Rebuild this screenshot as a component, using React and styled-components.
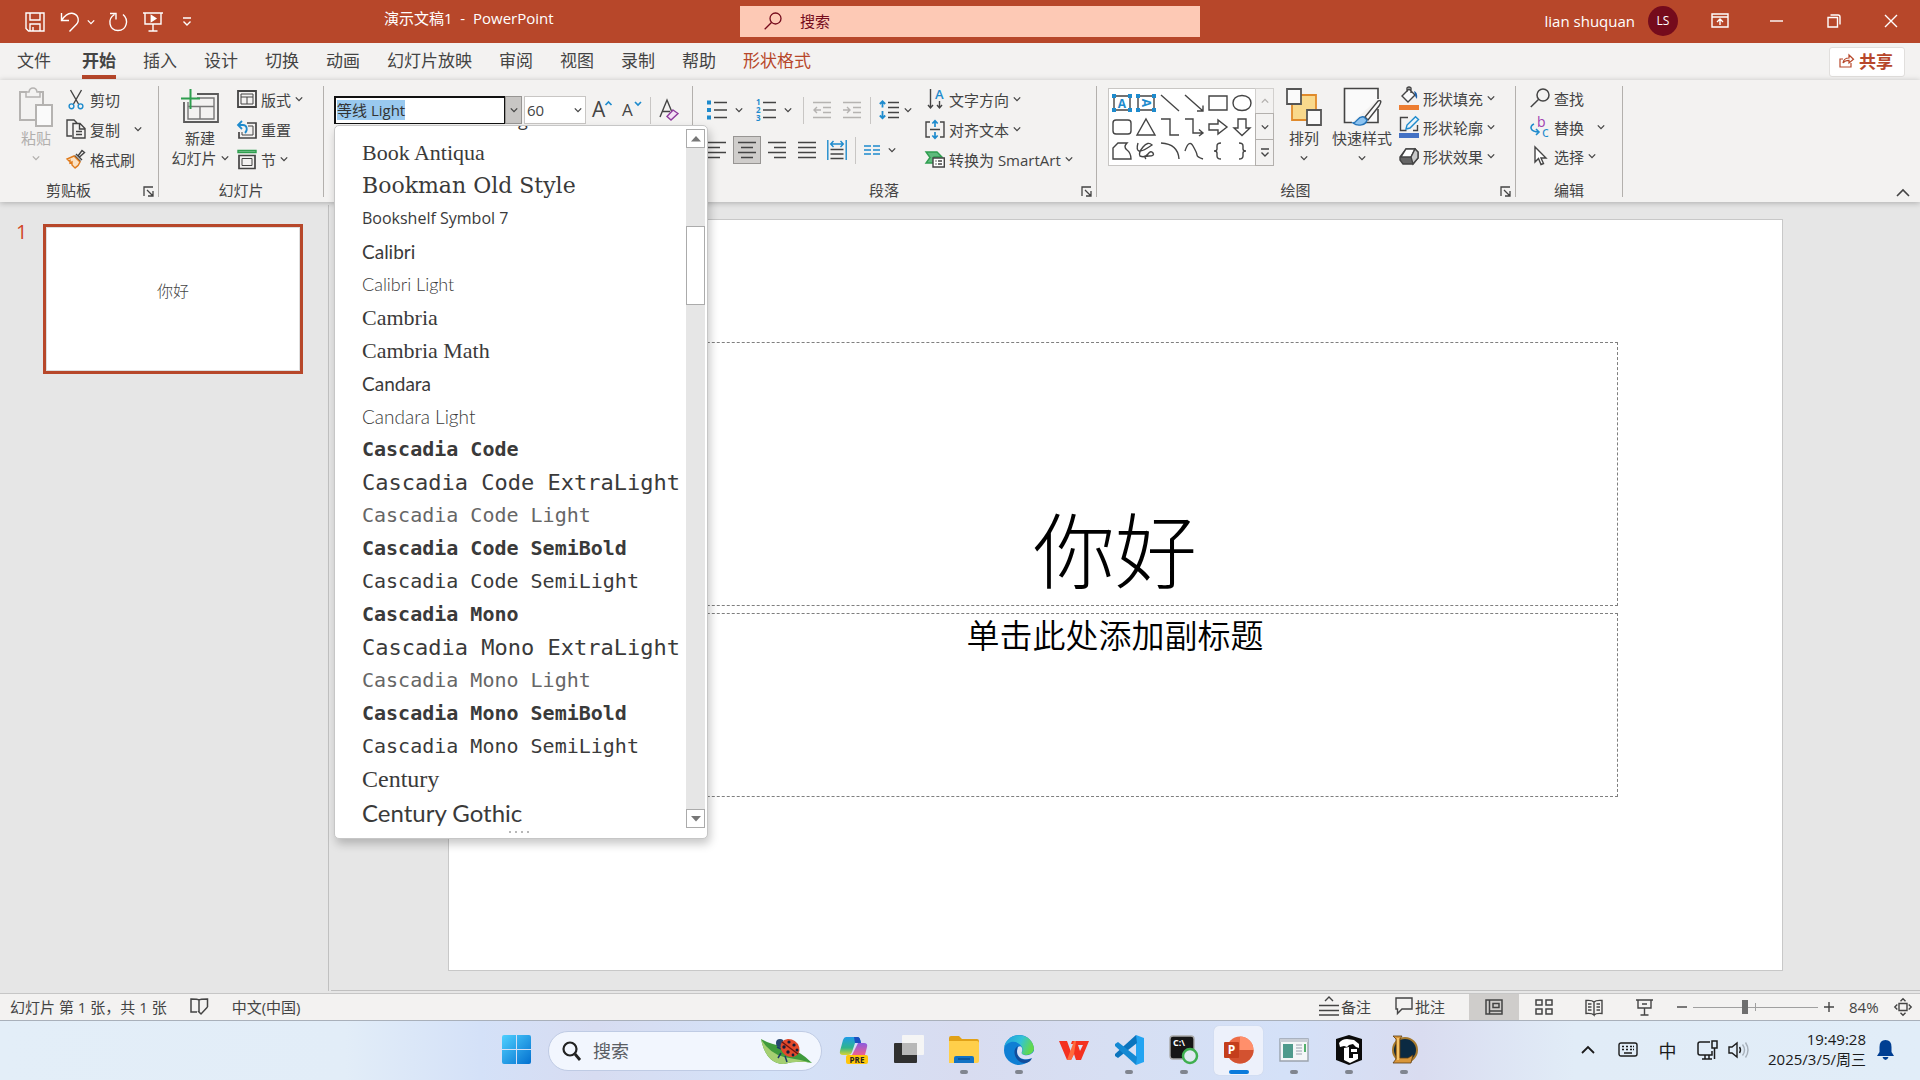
import React, { useEffect, useRef } from 'react';
import styled, { createGlobalStyle, css } from 'styled-components';

const ui = '"Open Sans", "Noto Sans CJK SC", sans-serif';

const GlobalStyle = createGlobalStyle`
  *, *::before, *::after { box-sizing: border-box; }
  html, body { margin: 0; height: 100%; overflow: hidden; }
  body { font-family: ${ui}; font-size: 15px; color: #444; background: #e6e6e6; }
  button, input, select { font: inherit; color: inherit; margin: 0; padding: 0; border: 0; background: none; border-radius: 0; outline: none; }
  button { white-space: nowrap; cursor: default; }
  svg { display: block; flex: none; }
  h1, p, ul { margin: 0; padding: 0; }
`;

const App = styled.div`
  display: flex;
  flex-direction: column;
  height: 100vh;
`;

/* ---------- title bar ---------- */

const TitleBar = styled.header`
  display: grid;
  grid-template-columns: 740fr 460fr 720fr;
  height: 43px;
  flex: none;
  background: #b7472a;
  color: #fff;
`;

const TitleLeft = styled.div`
  display: flex;
  align-items: center;
`;

const QuickAccess = styled.div`
  display: flex;
  align-items: center;
  padding: 1px 0 0 19px;
  width: 384px;
`;

const QuickButton = styled.button`
  display: grid;
  place-items: center;
  width: ${(p) => p.$w || 32}px;
  height: 32px;
  margin-left: ${(p) => p.$ml || 0}px;
`;

const DocTitle = styled.div`
  font-size: 15px;
  line-height: 36px;
  height: 43px;
  white-space: pre;
`;

const TitleSearch = styled.label`
  display: flex;
  align-items: center;
  gap: 18px;
  height: 31px;
  margin-top: 6px;
  padding: 0 24px 2px;
  background: #fdc9b5;
  color: #750b1c;
  input { flex: 1; min-width: 0; }
  input::placeholder { color: #750b1c; opacity: 1; }
`;

const TitleRight = styled.div`
  display: flex;
  align-items: center;
  justify-content: flex-end;
  padding: 0 1px 2px 0;
`;

const Avatar = styled.div`
  width: 30px;
  height: 30px;
  margin: 0 13px 0 13px;
  border-radius: 50%;
  background: #750b1c;
  font-size: 12px;
  line-height: 30px;
  text-align: center;
`;

const WindowButton = styled.button`
  display: grid;
  place-items: center;
  width: 57px;
  height: 40px;
`;

/* ---------- ribbon ---------- */

const TabBar = styled.nav`
  display: flex;
  align-items: flex-start;
  gap: 27px;
  height: 37px;
  flex: none;
  padding: 0 15px 0 17px;
  background: #f3f2f1;
`;

const Tab = styled.button`
  height: 36px;
  padding-top: 4px;
  margin-right: ${(p) => (p.$file ? 4 : 0)}px;
  font-size: 17px;
  line-height: 28px;
  border-bottom: 4px solid transparent;
  ${(p) => p.$active && css`font-weight: 700; border-color: #b7472a;`}
  ${(p) => p.$context && css`color: #b7472a;`}
`;

const ShareButton = styled.button`
  display: flex;
  align-items: center;
  justify-content: center;
  gap: 5px;
  width: 76px;
  height: 30px;
  margin: 4px 0 0 auto;
  padding: 0 2px 3px 0;
  border: 1px solid #e1dfdd;
  border-radius: 3px;
  background: #fff;
  color: #b7472a;
  font-size: 17px;
  font-weight: 700;
`;

const RibbonBar = styled.section`
  position: relative;
  z-index: 2;
  display: flex;
  height: 122px;
  flex: none;
  padding: 6px 0 5px;
  background: #f3f2f1;
  box-shadow: 0 1px 6px rgba(0, 0, 0, 0.25);
`;

const GroupBox = styled.div`
  display: flex;
  flex-direction: column;
  flex: none;
  width: ${(p) => p.$w}px;
  border-right: 1px solid #b3b0ad;
`;

const GroupBody = styled.div`
  display: flex;
  align-items: flex-start;
  flex: 1;
  padding-left: ${(p) => p.$pl}px;
`;

const GroupFoot = styled.div`
  display: flex;
  align-items: center;
  height: 12px;
  span { flex: 1; text-align: center; line-height: 12px; padding-bottom: 2px; }
`;

const Launcher = styled.button`
  width: 21px;
  height: 12px;
  padding-left: 6px;
`;

const Collapse = styled.button`
  align-self: flex-end;
  margin: 0 10px 0 auto;
`;

const BigButton = styled.button`
  display: flex;
  flex-direction: column;
  align-items: center;
  width: ${(p) => p.$w}px;
  margin-right: ${(p) => p.$mr}px;
  color: ${(p) => (p.$off ? '#b1afad' : '#444')};
  line-height: 20px;
`;

const BigIcon = styled.span`
  display: grid;
  place-items: center;
  height: 42px;
`;

const BigLine = styled.span`
  display: flex;
  align-items: center;
  justify-content: center;
  gap: 4px;
  height: 20px;
`;

const Column = styled.div`
  display: flex;
  flex-direction: column;
  align-items: flex-start;
  gap: ${(p) => p.$gap || 0}px;
`;

const SmallBtn = styled.button`
  display: flex;
  align-items: center;
  height: ${(p) => p.$h || 30}px;
  padding-bottom: 4px;
`;

const IconSlot = styled.span`
  display: grid;
  place-items: center;
  width: 24px;
  margin-right: 2px;
`;

const ChevronSlot = styled.span`
  margin-left: ${(p) => p.$gap}px;
`;

const ToolRow = styled.div`
  display: flex;
  align-items: center;
  gap: 2px;
  height: 28px;
  margin-top: ${(p) => p.$mt}px;
`;

const ParagraphTools = styled.div`
  width: 220px;
`;

const ToolButton = styled.button`
  display: grid;
  place-items: center;
  width: 28px;
  height: 28px;
  ${(p) => p.$on && css`background: #cfcdcb; border: 1px solid #979593;`}
`;

const SplitButton = styled.button`
  display: flex;
  align-items: center;
  gap: ${(p) => p.$gap}px;
  width: 47px;
  height: 28px;
  padding-left: 4px;
`;

const Separator = styled.i`
  width: 1px;
  height: 27px;
  margin: 0 2px;
  background: #c8c6c4;
`;

/* ---------- font picker ---------- */

const FontCombo = styled.div`
  position: relative;
  display: flex;
  width: 188px;
  height: 28px;
  background: #fff;
`;

const FontInput = styled.input`
  flex: 1;
  min-width: 0;
  padding: 0 0 1px 1px;
  border: 2px solid #111;
  border-right-width: 1px;
  border-bottom-width: 1px;
  font-size: 15px;
  line-height: 20px;
  &::selection { background: #99c9ef; color: #333; }
`;

const FontArrow = styled.button`
  display: grid;
  place-items: center;
  width: 17px;
  border: 1px solid #979593;
  background: #c8c6c4;
`;

const SizeCombo = styled.label`
  display: flex;
  align-items: center;
  width: 62px;
  height: 28px;
  padding: 0 3px 0 2px;
  border: 1px solid #c8c6c4;
  background: #fff;
  select { flex: 1; appearance: none; }
`;

const FontMenu = styled.div`
  position: absolute;
  top: 29px;
  left: 0;
  display: flex;
  width: 374px;
  height: 714px;
  padding: 3px 2px 11px 0;
  border: 1px solid #c6c6c6;
  border-radius: 5px;
  background: #fff;
  box-shadow: 2px 5px 10px rgba(0, 0, 0, 0.22);
`;

const FontList = styled.ul`
  display: flex;
  flex-direction: column;
  justify-content: flex-end;
  flex: 1;
  height: 703px;
  margin-top: -3px;
  overflow: hidden;
  list-style: none;
`;

const FontItem = styled.li`
  flex: none;
  height: 33px;
  padding-left: 27px;
  line-height: 33px;
  white-space: nowrap;
  font-family: ${(p) => p.$family};
  font-size: ${(p) => p.$size}px;
  font-weight: ${(p) => p.$weight || 400};
  color: ${(p) => (p.$light ? '#666' : '#3a3a3a')};
`;

const ScrollTrack = styled.div`
  display: flex;
  flex-direction: column;
  width: 19px;
  height: 699px;
  background: #e6e6e6;
`;

const ScrollArrow = styled.button`
  display: grid;
  place-items: center;
  height: 19px;
  border: 1px solid #ababab;
  background: #fff;
`;

const ScrollThumb = styled.div`
  height: 79px;
  margin: 78px 0 auto;
  border: 1px solid #ababab;
  background: #fff;
`;

const Grip = styled.div`
  position: absolute;
  left: 0;
  right: 0;
  bottom: 5px;
  display: flex;
  justify-content: center;
  gap: 4px;
  padding-right: 4px;
  i { width: 2px; height: 2px; background: #b8b8b8; }
`;

/* ---------- shape gallery ---------- */

const Gallery = styled.div`
  display: flex;
  width: 166px;
  height: 78px;
  margin: 2px 8px 0 0;
  border: 1px solid #c8c6c4;
  background: #fff;
`;

const ShapeGrid = styled.div`
  display: grid;
  grid-template-columns: repeat(6, 24px);
  grid-template-rows: repeat(3, 24px);
  padding: 2px 1px;
  button { display: grid; place-items: center; }
`;

const GalleryScroll = styled.div`
  display: grid;
  grid-template-rows: repeat(3, 1fr);
  width: 19px;
  margin: -1px -1px -1px auto;
  button {
    display: grid;
    place-items: center;
    border: 1px solid #b3b0ad;
    margin-top: -1px;
    background: #f3f2f1;
  }
  button:first-child { margin: 0; border-color: #d2d0ce; }
`;

/* ---------- workspace ---------- */

const Workspace = styled.main`
  display: flex;
  flex: 1;
  min-height: 0;
  padding: 3px 0 2px;
`;

const Thumbnails = styled.aside`
  display: flex;
  align-items: flex-start;
  gap: 18px;
  width: 329px;
  flex: none;
  padding: 19px 0 0 16px;
  border-right: 1px solid #c0c0c0;
`;

const ThumbNumber = styled.span`
  width: 9px;
  font-size: 20px;
  line-height: 16px;
  color: #d24726;
`;

const Thumb = styled.button`
  width: 260px;
  height: 150px;
  padding: 0 0 19px;
  border: 3px solid #b7472a;
  background: #fff;
  box-shadow: inset 0 0 0 1px #dedede;
  font-size: 16px;
  font-weight: 300;
`;

const Editor = styled.section`
  flex: 1;
  min-width: 0;
  margin-left: 2px;
  padding: 14px 137px 0 117px;
  border-bottom: 1px solid #c0c0c0;
`;

const Slide = styled.article`
  display: grid;
  grid-template-columns: 163fr 1006fr 164fr;
  grid-template-rows: 122fr 264fr 7fr 184fr 172fr;
  width: 100%;
  aspect-ratio: 1334 / 751;
  border: 1px solid #c8c8c8;
  background: #fff;
  color: #000;
`;

const Placeholder = styled.div`
  display: flex;
  justify-content: center;
  grid-column: 2;
  grid-row: ${(p) => p.$row};
  align-items: ${(p) => p.$align};
  border: 1px dashed #7f7f7f;
  font-family: "Noto Sans CJK SC", sans-serif;
  h1 { font-size: 82px; line-height: 116px; font-weight: 300; }
  p { font-size: 33px; line-height: 40px; font-weight: 350; }
`;

/* ---------- status bar ---------- */

const StatusBar = styled.footer`
  display: flex;
  align-items: center;
  height: 28px;
  flex: none;
  padding: 0 8px 0 10px;
  border-top: 1px solid #c6c6c6;
  border-bottom: 1px solid #a9b0ba;
  background: #f3f2f1;
`;

const StatusLeft = styled.div`
  display: flex;
  align-items: center;
  gap: 23px;
  padding-bottom: 2px;
  white-space: pre;
`;

const StatusRight = styled.div`
  display: flex;
  align-items: center;
  height: 100%;
  margin-left: auto;
`;

const StatusButton = styled.button`
  display: flex;
  align-items: center;
  gap: 2px;
  margin-right: 24px;
  padding-bottom: 2px;
`;

const ViewButton = styled.button`
  display: grid;
  place-items: center;
  width: 50px;
  height: 26px;
  background: ${(p) => (p.$on ? '#cfcdcb' : 'transparent')};
`;

const ZoomSlider = styled.input`
  appearance: none;
  width: 125px;
  height: 20px;
  margin: 0 5px;
  background:
    linear-gradient(#a0a0a0, #a0a0a0) 62px 6px / 1px 8px no-repeat,
    linear-gradient(#a0a0a0, #a0a0a0) 0 10px / 100% 1px no-repeat;
  &::-webkit-slider-thumb {
    appearance: none;
    width: 6px;
    height: 14px;
    background: #6e6e6e;
  }
`;

const ZoomValue = styled.span`
  width: 31px;
  margin: 0 14px;
`;

/* ---------- taskbar ---------- */

const Taskbar = styled.nav`
  display: flex;
  align-items: center;
  justify-content: space-between;
  height: 59px;
  flex: none;
  background: linear-gradient(90deg, #e3eef8 0%, #e2edf8 18%, #d4e1f8 25%, #d7dcf1 31%, #d4e2f8 40%, #d8dcf0 50%, #d7dff3 58%, #d4e1f8 67%, #d9dcf0 74%, #e1ecf7 82%, #e1edf8 100%);
`;

const TaskEdge = styled.div`
  display: flex;
  flex: 1;
  align-items: center;
  justify-content: flex-end;
`;

const TaskCenter = styled.div`
  display: flex;
  align-items: center;
`;

const TaskSearch = styled.label`
  display: flex;
  align-items: center;
  gap: 12px;
  width: 274px;
  height: 40px;
  margin: 0 4px;
  padding: 0 8px 0 13px;
  border: 1px solid #bfcbe4;
  border-radius: 20px;
  background: #f2f6fe;
  font-size: 18px;
  input { flex: 1; min-width: 0; }
  input::placeholder { color: #5a5d63; opacity: 1; }
`;

const TaskButton = styled.button`
  display: flex;
  flex-direction: column;
  align-items: center;
  width: 49px;
  height: 49px;
  margin: 0 3px;
  padding-top: 9px;
  border-radius: 5px;
  ${(p) => p.$on && css`background: #edf1fb; box-shadow: 0 0 1px #b9c2d6;`}
  &::after {
    content: '';
    width: ${(p) => (p.$on ? 20 : 8)}px;
    height: 4px;
    margin-top: 5px;
    border-radius: 2px;
    background: ${(p) => (p.$on ? '#0a7bdc' : p.$running ? '#80858f' : 'transparent')};
  }
`;

const Tray = styled.div`
  display: flex;
  align-items: center;
  margin-right: 25px;
  padding-bottom: 2px;
  color: #1b1b1b;
`;

const TrayButton = styled.button`
  display: grid;
  place-items: center;
  width: ${(p) => p.$w}px;
  height: 40px;
  font-size: 18px;
`;

const Clock = styled.time`
  width: 107px;
  margin: 0 9px 0 10px;
  padding-bottom: 2px;
  line-height: 20px;
  text-align: right;
  white-space: nowrap;
`;

/* ---------- drawings ---------- */

function Ico({ w = 20, h = 20, vb, s = 'currentColor', sw = 1.4, f = 'none', children }) {
  return (
    <svg width={w} height={h} viewBox={vb || `0 0 ${w} ${h}`} fill={f} stroke={s} strokeWidth={sw} overflow="visible" aria-hidden="true">
      {children}
    </svg>
  );
}

const BLUE = '#1e8bcd';

const Chevron = ({ up, color }) => (
  <Ico w={8} h={6} s={color || 'currentColor'} sw={1.3}><path d={up ? 'M.8 4.6 4 1.4l3.2 3.2' : 'M.8 1.4 4 4.6l3.2-3.2'} /></Ico>
);

const icons = {
  save: <Ico><path d="M1 1h18v18H3.500L1 16.500zM5 1v7h10V1M5 19v-7h10v7M8 19v-4" /></Ico>,
  undo: <Ico><path d="M1.500 1v7.500H9M1.500 8.500C5 3 8.500 1 12 1.300c6 .6 8 7 4.500 11L9.500 19.500" /></Ico>,
  redo: <Ico><path d="M15 2.500c6 5 4 16-5 16S-1 7 6.500 2.500M2 1.500h6v6" /></Ico>,
  present: <Ico><path d="M0 1h20M2 1v11h16V1M10 12v7M5.500 19h9" /><path d="m8.300 3.500 4.500 3-4.500 3z" fill="currentColor" /></Ico>,
  customize: <Ico w={10} h={10}><path d="M1 1h8M1.500 4.500 5 8l3.500-3.500" /></Ico>,
  ribbonUp: <Ico w={18} h={16}><path d="M1 1h16v13H1zM1 4h16M9 12V6.500M6 9l3-3 3 3" /></Ico>,
  min: <Ico w={14} h={14}><path d="M0 7h13" /></Ico>,
  restore: <Ico w={14} h={14}><path d="M1 3.500h9.500V13H1zM3.500 1H11q2 0 2 2v7.500" /></Ico>,
  close: <Ico w={14} h={14}><path d="m1 1 12 12M13 1 1 13" /></Ico>,
  search: <Ico w={18} h={18} sw={1.300}><circle cx="11.500" cy="6.500" r="5.500" /><path d="M7.500 10.500.7 17.300" /></Ico>,
  share: <Ico w={15} h={15} sw={1.200}><path d="M4 6H1v8h11v-4M4 10c.5-3.500 2.500-5 6-5V2l4.500 4.200L10 10V7.300c-3 0-4.500.7-6 2.700z" /></Ico>,
  paste: <Ico w={36} h={40} s="#b5b3b1" sw={2}><path d="M9 5H2v28h17M25 17V5h-5" /><path d="M8 10V5h3q.5-4 4-4t4 4h3v5z" fill="#f3f2f1" strokeWidth="1.500" /><path d="M18 18h16v21H18z" fill="#fafafa" /></Ico>,
  cut: <Ico w={16} h={21}><path d="m2.500 1 8 14M13.500 1l-8 14" /><circle cx="3.500" cy="17.300" r="2.400" stroke={BLUE} /><circle cx="12.500" cy="17.300" r="2.400" stroke={BLUE} /></Ico>,
  copy: <Ico w={20} h={20}><path d="M6 17H1V1h7l3 3M7 4.500h7l5 5V19H7zM13.500 5v5H19M10 12.500h6M10 15.500h6" /></Ico>,
  painter: <Ico w={20} h={20}><path d="m10 5 6 6M12 7l4-5.500 2.500 2-5 4.500M8.500 6.500l6 6" /><path d="M8 7 1 10l2 2 1-.5L4 14l2-1 0 3 3 3c2-1 4-3 5-6z" stroke="#e07b1c" fill="#fbe2c4" /></Ico>,
  newSlide: <Ico w={40} h={36}><path d="M17 5h21v28H4V13" stroke="#5b5b5b" strokeWidth="1.800" /><path d="M8 13v17h26V9H17M8 17.500h26M20 17.500V30" stroke="#777" /><path d="M10.500 0v20M1 9.500h19" stroke="#2e9e4f" strokeWidth="2" /></Ico>,
  layout: <Ico w={20} h={18} sw={1.800}><path d="M1 1h18v16H1z" /><path d="M4 4h12v10H4zM4 7h12M10 7v7" strokeWidth="1" /></Ico>,
  reset: <Ico w={20} h={19}><path d="M10 3h9v15H2v-6" strokeWidth="1.700" /><path d="M11 6h5v9H5v-3" strokeWidth="1" /><path d="M1 5h5c4 0 5 5 2 8M5 1 1 5l4 4" stroke={BLUE} strokeWidth="1.800" /></Ico>,
  section: <Ico w={20} h={21}><path d="M1 1.500h18v2H1z" stroke="#2e9e4f" fill="#9bd0aa" /><path d="M2 6.500h16v13H2z" strokeWidth="1.700" /><path d="M5 9.500h10v7H5z" strokeWidth="1" /></Ico>,
  clear: <Ico w={21} h={22}><path d="M1 18 8 1l4.500 11M3 12.500h8" /><path d="m14 11 5 3.500-7 6.500-4-3.500z" stroke="#8f3c9e" fill="#f3e2f5" /></Ico>,
  bullets: <Ico w={20} h={20}><path d="M7 2.500h13M7 10h13M7 17.500h13" /><path d="M0 .5h4v4H0zM0 8h4v4H0zM0 15.500h4v4H0z" fill={BLUE} stroke="none" /></Ico>,
  decIndent: <Ico w={18} h={18} s="#b5b3b1"><path d="M0 1.500h18M10 6.500h8M10 11.500h8M0 16.500h18M1 9h7M4 6 1 9l3 3" /></Ico>,
  incIndent: <Ico w={18} h={18} s="#b5b3b1"><path d="M0 1.500h18M10 6.500h8M10 11.500h8M0 16.500h18M0 9h7M4 6l3 3-3 3" /></Ico>,
  spacing: <Ico w={20} h={20}><path d="M9 2.500h11M9 7.500h11M9 12.500h11M9 17.500h11" /><path d="M3.500 1.500v6M.8 4l2.700-2.700L6.200 4M3.500 11v6.500M.8 15.500l2.700 2.700 2.700-2.700" stroke={BLUE} strokeWidth="1.800" /></Ico>,
  alignL: <Ico w={18} h={18}><path d="M0 1.500h18M0 6.500h12M0 11.500h18M0 16.500h12" /></Ico>,
  alignC: <Ico w={18} h={18}><path d="M0 1.500h18M3 6.500h12M0 11.500h18M3 16.500h12" /></Ico>,
  alignR: <Ico w={18} h={18}><path d="M0 1.500h18M6 6.500h12M0 11.500h18M6 16.500h12" /></Ico>,
  justify: <Ico w={18} h={18}><path d="M0 1.500h18M0 6.500h18M0 11.500h18M0 16.500h18" /></Ico>,
  distribute: <Ico w={20} h={20}><path d="M3.500 9.500h13M3.500 14h13M3.500 18.500h13" /><path d="M.8 0v20M19.200 0v20M4 4h12M6.500 1 3.700 4l2.800 3M13.500 1l2.800 3-2.800 3" stroke={BLUE} /></Ico>,
  columns: <Ico w={16} h={10} s={BLUE}><path d="M0 1h7M0 5h7M0 9h7M9 1h7M9 5h7M9 9h7" /></Ico>,
  alignText: <Ico w={20} h={19}><path d="M5 2H1v15h4M15 2h4v15h-4M5 9.500h10" /><path d="M10 1v6M7.300 3.500 10 .8l2.700 2.700M10 18v-6M7.300 15.500l2.700 2.700 2.700-2.700" stroke={BLUE} strokeWidth="1.700" /></Ico>,
  smartArt: <Ico w={20} h={17}><path d="M1 1h11l5 5H9v6H1l4-5.500z" fill="#5fba7d" stroke="#2e9e4f" /><path d="M8 7h11.300v9H8z" fill="#fff" /><path d="M10.500 10h1M13 10h4M10.500 13h1M13 13h4" /></Ico>,
  arrange: <Ico w={36} h={38}><path d="M6 7h24v25H6z" fill="#f9d98c" stroke="#e08a2b" strokeWidth="1.800" /><path d="M1 1h14v15H1zM21 22h14v15H21z" fill="#fafafa" stroke="#555" strokeWidth="1.800" /></Ico>,
  quick: <Ico w={38} h={40}><path d="M35 12V1.500H1.500v34H9M35 22v13.500H22" strokeWidth="1.600" fill="#fafafa" /><path d="M35 14c3-1 4 0 1 5L25 33l-3-3z" fill="#fafafa" /><path d="M21 30c-6-2-7 6-11 6 5 4 13 2 14-3z" fill="#8cc3f0" stroke="#2574b8" /></Ico>,
  fill: <Ico w={20} h={24}><path d="m3 10 7-7 6 6-7 7zM8 6V2q2-2 4 0v5" fill="#fafafa" /><path d="M15 5q4 1 3 8-2-2-2-4z" fill="#1e5fa8" stroke="none" /><path d="M0 19h20v5H0z" fill="#ed7d31" stroke="none" /></Ico>,
  outline: <Ico w={20} h={22}><path d="M9 1.500H1.500v13h6M18.500 9v5.500H14" /><path d="m7 13 1-4L16.500.8l3 2.700L11 12z" stroke={BLUE} fill="#e9f4fb" /><path d="M0 17h20v5H0z" fill="#4472c4" stroke="none" /></Ico>,
  effects: <Ico w={20} h={17}><path d="M7 1h9l3 3v6l-5 6H4l-3-4V9z" fill="#666" /><path d="M7 1h9l-4 8H2z" fill="#fff" /><path d="m12 9 4-8 3 3v6l-5 6z" fill="#c9c9c9" /></Ico>,
  find: <Ico w={20} h={20} sw={1.500}><circle cx="13" cy="7" r="6" /><path d="M8.700 11.300.8 19" /></Ico>,
  select: <Ico w={14} h={20}><path d="M2 1v15l3.500-3.500L8 18.500l2.500-1L8 12h5z" fill="#fff" /></Ico>,
  launcher: <Ico w={11} h={11} sw={1.300}><path d="M1 10V1h9M4 4l5.500 5.500M10 5v5H5" /></Ico>,
  book: <Ico w={19} h={17} sw={1.500}><path d="M9 14V2Q8 1 1 1v13h6M9 2q1-1 8.500-1v8M17.500 9 11 16l-3-3" /></Ico>,
  notes: <Ico w={20} h={20}><path d="m6 5 4-4 4 4M0 9.500h20M0 14.500h20M0 19h20" /></Ico>,
  comment: <Ico w={18} h={18}><path d="M1 1h16v11H7l-4.500 4.500V12H1z" /></Ico>,
  normal: <Ico w={18} h={16} sw={1.500}><path d="M1 1h16v14H1zM4.500 1v14M4.500 12H17M8 4.500h6v4H8z" /></Ico>,
  sorter: <Ico w={18} h={16} sw={1.500}><path d="M1 1h6v5H1zM11 1h6v5h-6zM1 10h6v5H1zM11 10h6v5h-6z" /></Ico>,
  reading: <Ico w={18} h={17}><path d="M9 3v13Q7 14 1 14.500V1.500Q7 1 9 3q2-2 8-1.500v13Q11 14 9 16M3 5h3.500M3 8h3.500M3 11h3.500M11.500 5H15M11.500 8H15M11.500 11H15" /></Ico>,
  show: <Ico w={17} h={17}><path d="M0 1h17M2 1v8h13V1M8.500 9v7M4.500 16h8M6 5h5" /></Ico>,
  fit: <Ico w={18} h={18}><path d="M5 5.500h8v7H5zM6.500 3.300 9 .8l2.500 2.500M6.500 14.700 9 17.200l2.500-2.500M3.300 6.500.8 9l2.500 2.500M14.700 6.500 17.200 9l-2.500 2.500" /></Ico>,
};

const Letter = styled.text`
  font-family: ${ui};
  stroke: none;
  fill: ${(p) => p.$c || '#444'};
`;

const GrowFont = ({ down }) => (
  <Ico w={20} h={22}>
    <Letter x="0" y={down ? 17 : 18} fontSize={down ? 17 : 21}>A</Letter>
    <path d={down ? 'm13 3 3 3 3-3' : 'm13.500 6 3-3 3 3'} stroke={BLUE} strokeWidth="1.700" />
  </Ico>
);

const Numbering = () => (
  <Ico w={20} h={22}>
    <path d="M7 3.500h13M7 11h13M7 18.500h13" />
    <Letter x="0" y="6" fontSize="8" fontWeight="700" $c={BLUE}>1</Letter>
    <Letter x="0" y="14" fontSize="8" fontWeight="700" $c={BLUE}>2</Letter>
    <Letter x="0" y="22" fontSize="8" fontWeight="700" $c={BLUE}>3</Letter>
  </Ico>
);

const TextDirection = () => (
  <Ico w={17} h={21}>
    <path d="M3.500 0v19M1 16l2.500 3L6 16M12.500 12v7M10 16l2.500 3 2.500-3" />
    <Letter x="8" y="10" fontSize="13" fontWeight="600" $c={BLUE}>A</Letter>
  </Ico>
);

const Replace = () => (
  <Ico w={20} h={20}>
    <Letter x="7" y="10" fontSize="14" $c="#a040b0">b</Letter>
    <Letter x="12" y="20" fontSize="14" $c={BLUE}>c</Letter>
    <path d="M4 7c-5 2-4 8 5 8M6 12l3 3-3 3" stroke={BLUE} strokeWidth="1.600" />
  </Ico>
);

const TextBoxShape = ({ turned }) => (
  <Ico w={20} h={18}>
    <path d="M2 2h16v14H2z" />
    <g transform={turned ? 'rotate(90 10 9)' : undefined}>
      <Letter x="10" y="13.500" fontSize="12" fontWeight="700" textAnchor="middle" $c={BLUE}>A</Letter>
    </g>
    <path d="M0 0h4v4H0zM16 0h4v4h-4zM0 14h4v4H0zM16 14h4v4h-4z" fill={BLUE} stroke="none" />
  </Ico>
);

const shapePaths = [
  'M1 1l18 16',
  'M1 1l18 16M19 11.500V17h-6',
  'M1 2h18v14H1z',
  'M10 1.500c12 0 12 15 0 15S-2 1.500 10 1.500z',
  'M4 2h12q3 0 3 3v8q0 3-3 3H4q-3 0-3-3V5q0-3 3-3z',
  'M10 1 19 17H1z',
  'M1 1h9v16h9',
  'M1 1h8v14h10M15 11.500l4 3.500-4 3',
  'M1 6h9V2l9 7-9 7v-4H1z',
  'M6 1h8v9h4l-8 7.500L2 10h4z',
  'M1 17V6l5-5h9q-4 4 0 7t4 9z',
  'M2 1Q0 8 3 9T16 3Q12-1 7 5t-3 9q5 2 8-2t5-1-4 3-3 3',
  'M1 1q17 1 18 16',
  'M1 9Q5-3 9 4t4 9 6 4',
  'M13 1q-4 0-4 3v3q0 2-3 2 3 0 3 2v3q0 3 4 3',
  'M7 1q4 0 4 3v3q0 2 3 2-3 0-3 2v3q0 3-4 3',
];

const Triangle = ({ down }) => (
  <Ico w={10} h={6} s="none" f="#777"><path d={down ? 'M0 0h10L5 5.500z' : 'M0 5.500h10L5 0z'} /></Ico>
);

const WindowsLogo = () => (
  <Ico w={30} h={30} s="none">
    <defs><linearGradient id="win" x1="0" y1="0" x2="1" y2="1"><stop offset="0" stopColor="#4fd0ff" /><stop offset="1" stopColor="#0370cf" /></linearGradient></defs>
    <path d="M0 2q0-2 2-2h12v14H0zM15 0h12q2 0 2 2v12H15zM0 15h14v14H2q-2 0-2-2zM15 15h14v12q0 2-2 2H15z" fill="url(#win)" />
  </Ico>
);

const Ladybug = () => (
  <Ico w={52} h={28} s="none">
    <path d="M0 2q10 6 22 7 15 3 29 17-14-3-28 1Q5 27 0 2z" fill="#3f9a3c" />
    <path d="M0 2q8 14 23 18 13 2 28 6-14-3-28 1Q5 27 0 2z" fill="#a5cf72" />
    <path d="m20 12-4-2M20 16l-3 5M24 19l2 6M27 8l-5 1" stroke="#1b3a6b" strokeWidth="1.500" />
    <circle cx="19" cy="6" r="4" fill="#27466f" />
    <ellipse cx="29" cy="11" rx="10" ry="8.500" transform="rotate(35 29 11)" fill="#e2492b" />
    <path d="m21 5 16 12" stroke="#6d1410" />
    <g fill="#141d3c"><circle cx="28" cy="5" r="1.600" /><circle cx="33" cy="8" r="1.600" /><circle cx="23" cy="10" r="1.700" /><circle cx="27" cy="15" r="1.700" /><circle cx="36" cy="13" r="1.500" /><circle cx="32" cy="18" r="1.400" /></g>
  </Ico>
);

const Copilot = () => (
  <Ico w={30} h={30} s="none">
    <defs>
      <linearGradient id="cpa" x1="0" y1="0" x2="0" y2="1"><stop offset="0" stopColor="#1f9be8" /><stop offset=".6" stopColor="#2fb58c" /><stop offset="1" stopColor="#d9d431" /></linearGradient>
      <linearGradient id="cpb" x1="0" y1="0" x2="0" y2="1"><stop offset="0" stopColor="#8a5ce0" /><stop offset="1" stopColor="#ef5f8e" /></linearGradient>
    </defs>
    <path d="M7 2h12q2 0 3 6h-6l-3 9q-1 3-4 3H4q-4 0-3-4L4 5q1-3 3-3z" fill="url(#cpa)" />
    <path d="M15 2h4q2 0 3 6h-6z" fill="#1c4fc0" />
    <path d="M19 8h6q4 0 3 4l-2 8H13z" fill="url(#cpb)" />
    <rect x="7" y="20" width="22" height="9" rx="2" fill="#ffc60a" />
    <Letter x="18" y="27.500" fontSize="8" fontWeight="700" textAnchor="middle" $c="#222">PRE</Letter>
  </Ico>
);

const TaskView = () => (
  <Ico w={30} h={30} s="none"><rect x="0" y="8" width="23" height="20" rx="1" fill="#303030" /><rect x="8" y="0" width="22" height="20" rx="1" fill="#f5f5f5" /><path d="M8 8h15v12H8z" fill="#b8b8b8" /></Ico>
);

const Folder = () => (
  <Ico w={30} h={30} s="none"><path d="M0 3q0-2 2-2h8l3 3h15q2 0 2 2v5H0z" fill="#e1a117" /><path d="M0 6h28q2 0 2 2v18q0 2-2 2H0z" fill="#ffcf4a" /><path d="M5 28v-5q0-2 2-2h16q2 0 2 2v5z" fill="#1272c4" /><path d="M9 24h12" stroke="#0a4f91" strokeWidth="1.500" /></Ico>
);

const Edge = () => (
  <Ico w={30} h={30} s="none">
    <defs><linearGradient id="eda" x1="0" y1="0" x2="1" y2=".3"><stop offset="0" stopColor="#1c9be0" /><stop offset=".6" stopColor="#33c3d6" /><stop offset="1" stopColor="#62d84e" /></linearGradient></defs>
    <circle cx="15" cy="15" r="15" fill="#0f7fd4" />
    <path d="M0 13C2-3 27-5 30 13c0 7-8 8-12 6-1-2 2-3 0-7C13 4 3 6 0 13z" fill="url(#eda)" />
    <path d="M14 11c-7 4-3 16 6 17 4 0 7-2 8-5-7 4-15 1-15-7q0-3 1-5z" fill="#124d9c" />
    <path d="M14 12q3-2 4 1c1 3-1 4 0 6 3 2 9 2 12-3v6l-2 1c-7 3-15 1-15-7z" fill="#dbe0f4" />
  </Ico>
);

const Wps = () => (
  <Ico w={30} h={30} s="none"><path d="M0 6h8l4 11 3-8h-3l1-3h17l-8 19h-5l-2-6-3 6H8z" fill="#f4311f" /><path d="m17 6-2 13-3 6H8l7-19z" fill="#ff6b3d" /><path d="m19 10 2 6 3-6z" fill="#dde1f4" /></Ico>
);

const VsCode = () => (
  <Ico w={30} h={30} s="none"><path d="m22 0 8 3v24l-8 3z" fill="#23a4f2" /><path d="m22 0 1 8L4 23l-3-2v-2z" fill="#0b74bd" /><path d="m22 30 1-8L4 7 1 9v2z" fill="#1489d3" /></Ico>
);

const Terminal = () => (
  <Ico w={30} h={30} s="none"><rect x="1" y="1" width="24" height="23" rx="3" fill="#161616" stroke="#a9a9a9" /><Letter x="4" y="11" fontSize="9" fontWeight="700" $c="#fff">C:\</Letter><circle cx="21" cy="21" r="7" fill="#dfe8f1" stroke="#3faf4f" strokeWidth="2.500" /></Ico>
);

const PowerPoint = () => (
  <Ico w={30} h={30} s="none"><circle cx="16" cy="15" r="13.500" fill="#ed6c47" /><path d="M16 1.500A13.500 13.500 0 0 1 29.500 15H16z" fill="#ff8f6b" /><path d="M2.500 15h27a13.500 13.500 0 0 1-27 0z" fill="#d35230" /><rect x="0" y="7" width="15" height="16" rx="1" fill="#c43e1c" /><Letter x="7.500" y="19" fontSize="12" fontWeight="700" textAnchor="middle" $c="#fff">P</Letter></Ico>
);

const AppWindow = () => (
  <Ico w={30} h={30} s="none"><path d="M1 4h28v22H1z" fill="#f4f6f8" stroke="#9aa3ad" /><path d="M1 4h28v3H1z" fill="#c9ced6" /><path d="M4 9h10v14H4z" fill="#4f9a8c" /><path d="M17 10h6M17 13h6M17 16h6M17 19h6" stroke="#b8bec6" /><path d="M25 9h2v8h-2z" fill="#54b06d" /></Ico>
);

const FistBadge = () => (
  <Ico w={30} h={30} s="none"><path d="M15 0 28 4v21l-13 5L2 25V4z" fill="#0b0b0b" /><path d="M5 8q3-4 8-4l7 1 5 4v4l-3-1-3-3-4 1-2 2-3-1-4 1zM10 13l5-1v11h4v-4h5v5l-8 4-6-3z" fill="#fff" /><path d="M17 14h6v3h-6z" fill="#fff" /></Ico>
);

const GoldBadge = () => (
  <Ico w={30} h={30} s="none"><circle cx="16" cy="15" r="12" fill="#0b2a42" stroke="#a5792d" strokeWidth="2" /><path d="M4 1h9l-2 3v19h8l5-3-2 8H4l3-4V4z" fill="#d9963a" stroke="#5e3e12" strokeWidth=".8" /><path d="M8 3h2v22H8z" fill="#f4c468" /></Ico>
);

/* ---------- data ---------- */

const serif = '"Liberation Serif", serif';
const slab = '"DejaVu Serif", serif';
const sans = 'Lato, sans-serif';
const mono = '"DejaVu Sans Mono", monospace';

const fonts = [
  { name: 'Bahnschrift SemiLight SemiConde', family: '"Open Sans", sans-serif', size: 18 },
  { name: 'Book Antiqua', family: serif, size: 22 },
  { name: 'Bookman Old Style', family: slab, size: 22 },
  { name: 'Bookshelf Symbol 7', family: '"Open Sans", sans-serif', size: 16 },
  { name: 'Calibri', family: sans, size: 19 },
  { name: 'Calibri Light', family: sans, size: 18, weight: 300 },
  { name: 'Cambria', family: serif, size: 22 },
  { name: 'Cambria Math', family: serif, size: 22 },
  { name: 'Candara', family: sans, size: 19 },
  { name: 'Candara Light', family: sans, size: 19, weight: 300 },
  { name: 'Cascadia Code', family: mono, size: 20, weight: 700 },
  { name: 'Cascadia Code ExtraLight', family: mono, size: 22 },
  { name: 'Cascadia Code Light', family: mono, size: 20, light: true },
  { name: 'Cascadia Code SemiBold', family: mono, size: 20, weight: 700 },
  { name: 'Cascadia Code SemiLight', family: mono, size: 20 },
  { name: 'Cascadia Mono', family: mono, size: 20, weight: 700 },
  { name: 'Cascadia Mono ExtraLight', family: mono, size: 22 },
  { name: 'Cascadia Mono Light', family: mono, size: 20, light: true },
  { name: 'Cascadia Mono SemiBold', family: mono, size: 20, weight: 700 },
  { name: 'Cascadia Mono SemiLight', family: mono, size: 20 },
  { name: 'Century', family: serif, size: 24 },
  { name: 'Century Gothic', family: sans, size: 24 },
];

const tabs = ['文件', '开始', '插入', '设计', '切换', '动画', '幻灯片放映', '审阅', '视图', '录制', '帮助', '形状格式'];

/* ---------- composed parts ---------- */

function Group({ w, pl, label, launcher, children }) {
  return (
    <GroupBox $w={w}>
      <GroupBody $pl={pl}>{children}</GroupBody>
      {label && (
        <GroupFoot>
          <span>{label}</span>
          {launcher && <Launcher aria-label={label}>{icons.launcher}</Launcher>}
        </GroupFoot>
      )}
    </GroupBox>
  );
}

function Small({ icon, children, arrow, gap = 4, h }) {
  return (
    <SmallBtn $h={h}>
      <IconSlot>{icon}</IconSlot>
      {children}
      {arrow && <ChevronSlot $gap={gap}><Chevron /></ChevronSlot>}
    </SmallBtn>
  );
}

function Big({ w, mr, icon, label, second, off }) {
  return (
    <BigButton $w={w} $mr={mr} $off={off}>
      <BigIcon>{icon}</BigIcon>
      <BigLine>{label}</BigLine>
      <BigLine>{second}<Chevron /></BigLine>
    </BigButton>
  );
}

function FontPicker() {
  const input = useRef(null);
  useEffect(() => {
    input.current.focus();
    input.current.select();
  }, []);
  return (
    <FontCombo>
      <FontInput ref={input} defaultValue="等线 Light" aria-label="字体" spellCheck={false} />
      <FontArrow><Chevron /></FontArrow>
      <FontMenu>
        <FontList role="listbox">
          {fonts.map((f) => (
            <FontItem key={f.name} role="option" $family={f.family} $size={f.size} $weight={f.weight} $light={f.light}>
              {f.name}
            </FontItem>
          ))}
        </FontList>
        <ScrollTrack>
          <ScrollArrow><Triangle /></ScrollArrow>
          <ScrollThumb />
          <ScrollArrow><Triangle down /></ScrollArrow>
        </ScrollTrack>
        <Grip><i /><i /><i /><i /></Grip>
      </FontMenu>
    </FontCombo>
  );
}

function Ribbon() {
  return (
    <RibbonBar>
      <Group w={159} pl={12} label="剪贴板" launcher>
        <Big w={48} mr={4} icon={icons.paste} label="粘贴" off />
        <Column>
          <Small icon={icons.cut}>剪切</Small>
          <Small icon={icons.copy} arrow gap={14}>复制</Small>
          <Small icon={icons.painter}>格式刷</Small>
        </Column>
      </Group>
      <Group w={165} pl={11} label="幻灯片">
        <Big w={60} mr={5} icon={icons.newSlide} label="新建" second="幻灯片" />
        <Column>
          <Small icon={icons.layout} arrow>版式</Small>
          <Small icon={icons.reset}>重置</Small>
          <Small icon={icons.section} arrow>节</Small>
        </Column>
      </Group>
      <Group w={369} pl={10}>
        <ToolRow $mt={10}>
          <FontPicker />
          <SizeCombo>
            <select aria-label="字号"><option>60</option></select>
            <Chevron />
          </SizeCombo>
          <ToolButton><GrowFont /></ToolButton>
          <ToolButton><GrowFont down /></ToolButton>
          <Separator />
          <ToolButton>{icons.clear}</ToolButton>
        </ToolRow>
      </Group>
      <Group w={404} pl={10} label="段落" launcher>
        <ParagraphTools>
          <ToolRow $mt={10}>
            <SplitButton $gap={8}>{icons.bullets}<Chevron /></SplitButton>
            <SplitButton $gap={8}><Numbering /><Chevron /></SplitButton>
            <Separator />
            <ToolButton>{icons.decIndent}</ToolButton>
            <ToolButton>{icons.incIndent}</ToolButton>
            <Separator />
            <SplitButton $gap={5}>{icons.spacing}<Chevron /></SplitButton>
          </ToolRow>
          <ToolRow $mt={12}>
            <ToolButton>{icons.alignL}</ToolButton>
            <ToolButton $on>{icons.alignC}</ToolButton>
            <ToolButton>{icons.alignR}</ToolButton>
            <ToolButton>{icons.justify}</ToolButton>
            <ToolButton>{icons.distribute}</ToolButton>
            <Separator />
            <SplitButton $gap={8}>{icons.columns}<Chevron /></SplitButton>
          </ToolRow>
        </ParagraphTools>
        <Column>
          <Small icon={<TextDirection />} arrow>文字方向</Small>
          <Small icon={icons.alignText} arrow>对齐文本</Small>
          <Small icon={icons.smartArt} arrow>转换为 SmartArt</Small>
        </Column>
      </Group>
      <Group w={419} pl={11} label="绘图" launcher>
        <Gallery>
          <ShapeGrid>
            <button aria-label="文本框"><TextBoxShape /></button>
            <button aria-label="竖排文本框"><TextBoxShape turned /></button>
            {shapePaths.map((d) => (
              <button key={d}><Ico w={20} h={18}><path d={d} /></Ico></button>
            ))}
          </ShapeGrid>
          <GalleryScroll>
            <button><Chevron up color="#b1afad" /></button>
            <button><Chevron /></button>
            <button>{icons.customize}</button>
          </GalleryScroll>
        </Gallery>
        <Big w={44} mr={5} icon={icons.arrange} label="排列" />
        <Big w={62} mr={4} icon={icons.quick} label="快速样式" />
        <Column $gap={1}>
          <Small h={28} icon={icons.fill} arrow>形状填充</Small>
          <Small h={28} icon={icons.outline} arrow>形状轮廓</Small>
          <Small h={28} icon={icons.effects} arrow>形状效果</Small>
        </Column>
      </Group>
      <Group w={107} pl={12} label="编辑">
        <Column $gap={1}>
          <Small h={28} icon={icons.find}>查找</Small>
          <Small h={28} icon={<Replace />} arrow gap={13}>替换</Small>
          <Small h={28} icon={icons.select} arrow>选择</Small>
        </Column>
      </Group>
      <Collapse aria-label="折叠功能区">
        <Ico w={14} h={9} sw={1.600}><path d="m1 8 6-6 6 6" /></Ico>
      </Collapse>
    </RibbonBar>
  );
}

export default function PowerPointScreen() {
  return (
    <App>
      <GlobalStyle />
      <TitleBar>
        <TitleLeft>
          <QuickAccess>
            <QuickButton>{icons.save}</QuickButton>
            <QuickButton $ml={3}>{icons.undo}</QuickButton>
            <QuickButton $w={10}><Chevron /></QuickButton>
            <QuickButton $ml={6}>{icons.redo}</QuickButton>
            <QuickButton $ml={3}>{icons.present}</QuickButton>
            <QuickButton $ml={2}>{icons.customize}</QuickButton>
          </QuickAccess>
          <DocTitle>{'演示文稿1  -  PowerPoint'}</DocTitle>
        </TitleLeft>
        <TitleSearch>
          {icons.search}
          <input type="text" placeholder="搜索" />
        </TitleSearch>
        <TitleRight>
          <span>lian shuquan</span>
          <Avatar>LS</Avatar>
          <WindowButton>{icons.ribbonUp}</WindowButton>
          <WindowButton>{icons.min}</WindowButton>
          <WindowButton>{icons.restore}</WindowButton>
          <WindowButton>{icons.close}</WindowButton>
        </TitleRight>
      </TitleBar>

      <TabBar>
        {tabs.map((t, i) => (
          <Tab key={t} $file={i === 0} $active={i === 1} $context={i === tabs.length - 1}>{t}</Tab>
        ))}
        <ShareButton>{icons.share}共享</ShareButton>
      </TabBar>
      <Ribbon />

      <Workspace>
        <Thumbnails>
          <ThumbNumber>1</ThumbNumber>
          <Thumb>你好</Thumb>
        </Thumbnails>
        <Editor>
          <Slide>
            <Placeholder $row={2} $align="flex-end"><h1>你好</h1></Placeholder>
            <Placeholder $row={4} $align="flex-start"><p>单击此处添加副标题</p></Placeholder>
          </Slide>
        </Editor>
      </Workspace>

      <StatusBar>
        <StatusLeft>
          <span>幻灯片 第 1 张，共 1 张</span>
          {icons.book}
          <span>中文(中国)</span>
        </StatusLeft>
        <StatusRight>
          <StatusButton>{icons.notes}备注</StatusButton>
          <StatusButton>{icons.comment}批注</StatusButton>
          <ViewButton $on>{icons.normal}</ViewButton>
          <ViewButton>{icons.sorter}</ViewButton>
          <ViewButton>{icons.reading}</ViewButton>
          <ViewButton>{icons.show}</ViewButton>
          <button aria-label="缩小"><Ico w={19} h={12}><path d="M8 6h10" /></Ico></button>
          <ZoomSlider type="range" min="0" max="100" defaultValue="41" aria-label="缩放" />
          <button aria-label="放大"><Ico w={12} h={12}><path d="M1 6h10M6 1v10" /></Ico></button>
          <ZoomValue>84%</ZoomValue>
          {icons.fit}
        </StatusRight>
      </StatusBar>

      <Taskbar>
        <TaskEdge />
        <TaskCenter>
          <TaskButton><WindowsLogo /></TaskButton>
          <TaskSearch>
            <Ico w={19} h={20} s="#222" sw={2.200}><circle cx="8" cy="8" r="6.500" /><path d="m13 13 5 6" strokeWidth="2.800" /></Ico>
            <input type="text" placeholder="搜索" />
            <Ladybug />
          </TaskSearch>
          <TaskButton><Copilot /></TaskButton>
          <TaskButton><TaskView /></TaskButton>
          <TaskButton $running><Folder /></TaskButton>
          <TaskButton $running><Edge /></TaskButton>
          <TaskButton><Wps /></TaskButton>
          <TaskButton $running><VsCode /></TaskButton>
          <TaskButton $running><Terminal /></TaskButton>
          <TaskButton $on><PowerPoint /></TaskButton>
          <TaskButton $running><AppWindow /></TaskButton>
          <TaskButton $running><FistBadge /></TaskButton>
          <TaskButton $running><GoldBadge /></TaskButton>
        </TaskCenter>
        <TaskEdge>
          <Tray>
            <TrayButton $w={40}><Ico w={14} h={9} sw={1.800}><path d="m1 8 6-6 6 6" /></Ico></TrayButton>
            <TrayButton $w={40}><Ico w={20} h={15}><rect x="1" y="1" width="18" height="13" rx="2" /><path d="M4 4.500h2M8 4.500h2M12 4.500h2M4 7.500h2M8 7.500h2M12 7.500h2M15 4.500h1M15 7.500h1M6 11h8" /></Ico></TrayButton>
            <TrayButton $w={39}>中</TrayButton>
            <TrayButton $w={40}><Ico w={21} h={20} sw={1.500}><path d="M13 2H3Q1 2 1 4v9q0 2 2 2h12v-4M5 19h10M8 15v4M12 15v4M15 1h5v7h-5zM17.500 8v11" /></Ico></TrayButton>
            <TrayButton $w={22}><Ico w={21} h={18}><path d="M1 6h3l5-4v14l-5-4H1z" /><path d="M11.500 6q2 3 0 6" /><path d="M14.500 3.500q4 5.500 0 11M17.500 1.500q5 7.500 0 15" stroke="#a7b0ba" /></Ico></TrayButton>
            <Clock>19:49:28<br />2025/3/5/周三</Clock>
            <TrayButton $w={20}><Ico w={17} h={20} s="none" f="#003e92"><path d="M8.500 0q6 0 6 7v5l2.500 4H0l2.500-4V7q0-7 6-7zM5.500 17h6q-1 3-3 3t-3-3z" /></Ico></TrayButton>
          </Tray>
        </TaskEdge>
      </Taskbar>
    </App>
  );
}
